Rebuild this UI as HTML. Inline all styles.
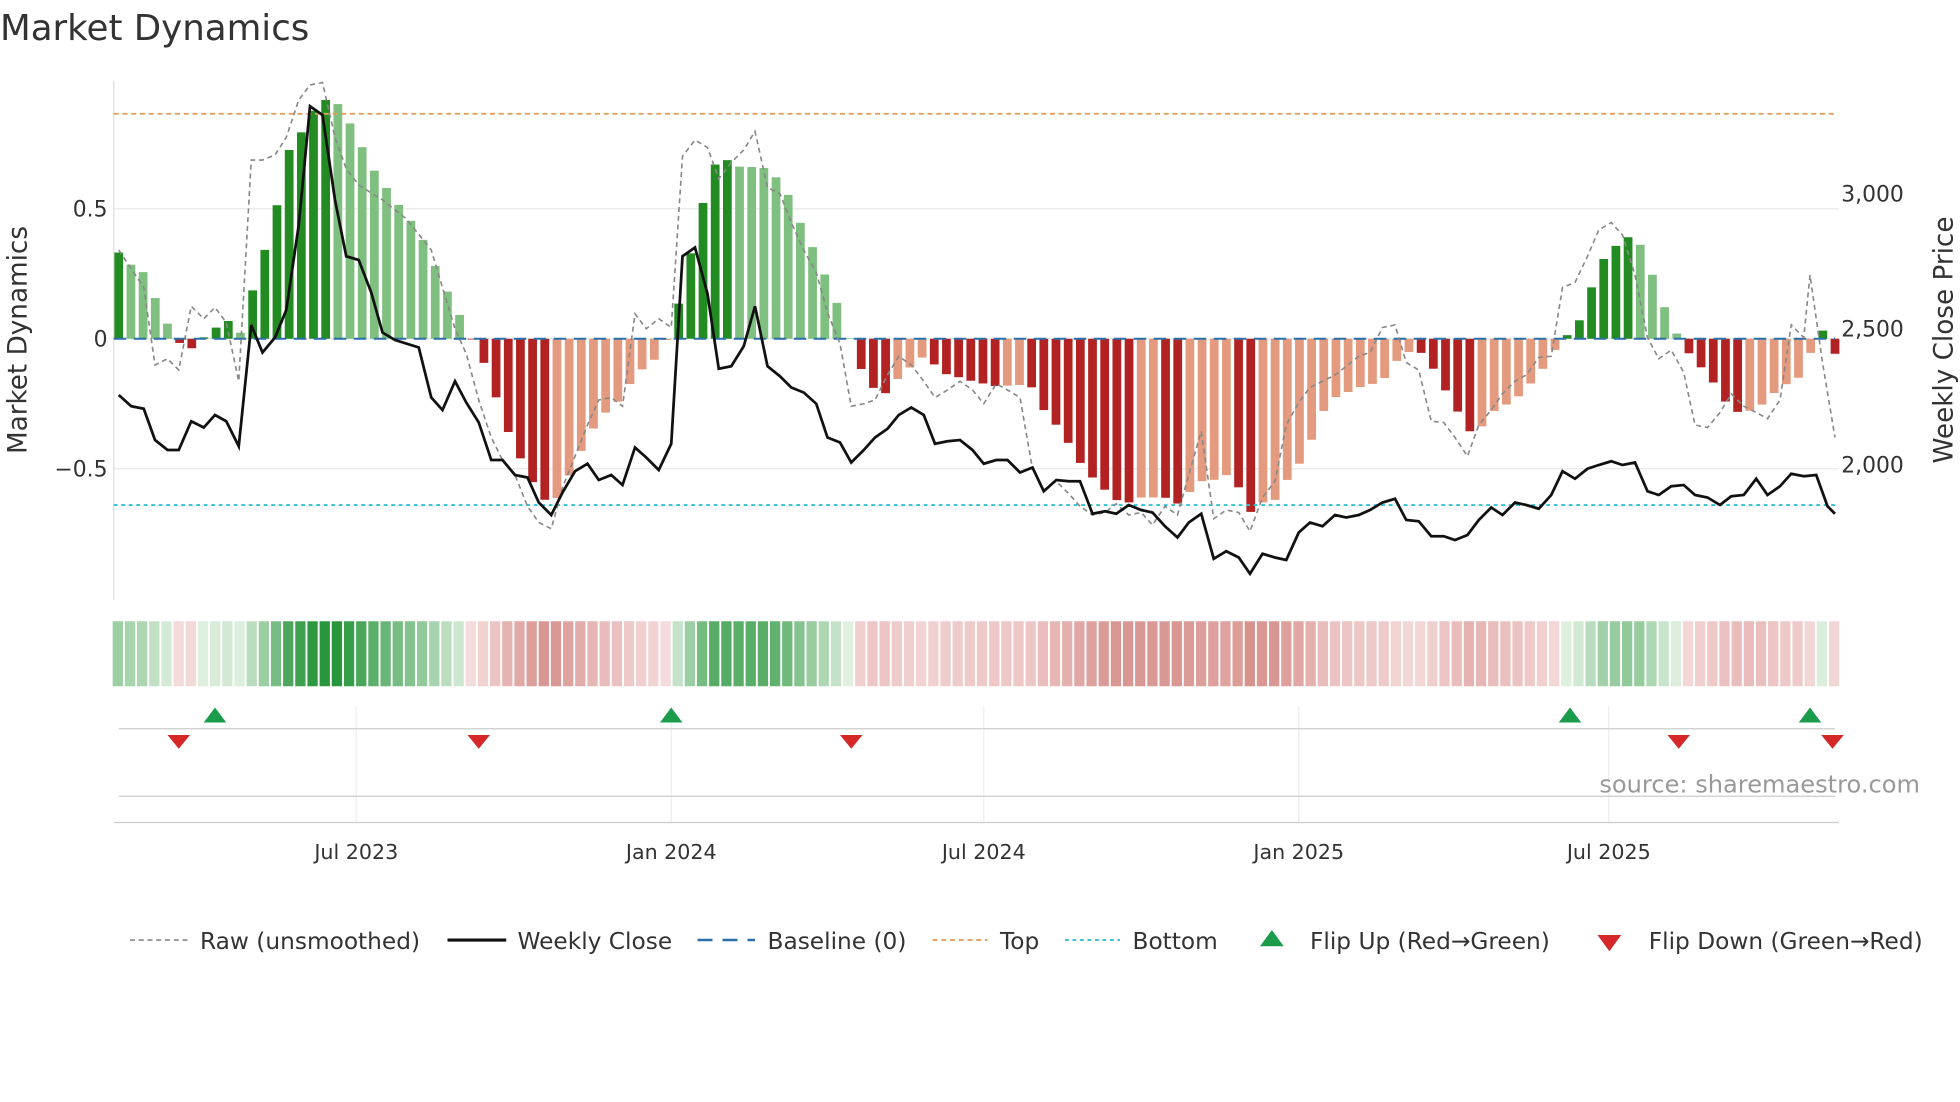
<!DOCTYPE html>
<html><head><meta charset="utf-8"><style>
html,body{margin:0;padding:0;background:#fff;width:1960px;height:1102px;overflow:hidden}
svg{display:block;font-family:"DejaVu Sans","Liberation Sans",sans-serif}
</style></head><body>
<svg id="s" width="1960" height="1102" viewBox="0 0 1568 881.6" xmlns="http://www.w3.org/2000/svg">
<text x="0" y="32" font-size="28.5" fill="#333">Market Dynamics</text>
<g id="grid" stroke="#e8e8e8" stroke-width="1">
<line x1="91" y1="167" x2="1471" y2="167"/><line x1="91" y1="271" x2="1471" y2="271"/><line x1="91" y1="375" x2="1471" y2="375"/>
</g>
<line x1="91" y1="65" x2="91" y2="480" stroke="#ddd"/>
<g font-size="17.5" fill="#333">
<text x="86" y="173" text-anchor="end">0.5</text>
<text x="86" y="277" text-anchor="end">0</text>
<text x="86" y="381" text-anchor="end">−0.5</text>
<text x="1473" y="161">3,000</text>
<text x="1473" y="269">2,500</text>
<text x="1473" y="378">2,000</text>
<text transform="translate(21,272) rotate(-90)" text-anchor="middle" font-size="21">Market Dynamics</text>
<text transform="translate(1562,272) rotate(-90)" text-anchor="middle" font-size="21">Weekly Close Price</text>
</g>
<g id="bars"></g>
<line x1="91" y1="91" x2="1468" y2="91" stroke="#e0a060" stroke-width="1.5" stroke-dasharray="4,3"/>
<line x1="91" y1="404" x2="1468" y2="404" stroke="#30c0d0" stroke-width="1.5" stroke-dasharray="3,3"/>
<line x1="91" y1="271" x2="1468" y2="271" stroke="#2a6fa8" stroke-width="1.6" stroke-dasharray="10,6"/>
<polyline id="raw" fill="none" stroke="#888" stroke-width="1.3" stroke-dasharray="4,3"/>
<polyline id="close" fill="none" stroke="#111" stroke-width="2.2"/>
<g id="heat"></g>
<g stroke="#eee"><line x1="285" y1="565" x2="285" y2="658"/><line x1="537" y1="565" x2="537" y2="658"/><line x1="787" y1="565" x2="787" y2="658"/><line x1="1039" y1="565" x2="1039" y2="658"/><line x1="1287" y1="565" x2="1287" y2="658"/></g>
<line x1="95" y1="583" x2="1468" y2="583" stroke="#ccc"/>
<line x1="95" y1="637" x2="1468" y2="637" stroke="#ccc"/>
<line x1="91" y1="658" x2="1471" y2="658" stroke="#ccc"/>
<g id="flips"></g>
<text x="1536" y="634" font-size="19.3" fill="#999" text-anchor="end">source: sharemaestro.com</text>
<g font-size="16.5" fill="#333" text-anchor="middle">
<text x="285" y="687">Jul 2023</text><text x="537" y="687">Jan 2024</text><text x="787" y="687">Jul 2024</text><text x="1039" y="687">Jan 2025</text><text x="1287" y="687">Jul 2025</text>
</g>
<g font-size="18.6" fill="#333">
<line x1="104" y1="752" x2="150" y2="752" stroke="#888" stroke-width="1.3" stroke-dasharray="4,3"/><text x="160" y="759">Raw (unsmoothed)</text>
<line x1="358" y1="752" x2="405" y2="752" stroke="#111" stroke-width="2.5"/><text x="414" y="759">Weekly Close</text>
<line x1="558" y1="752" x2="604" y2="752" stroke="#2a6fa8" stroke-width="2" stroke-dasharray="12,8"/><text x="614" y="759">Baseline (0)</text>
<line x1="746" y1="752" x2="790" y2="752" stroke="#e0a060" stroke-width="1.5" stroke-dasharray="4,3"/><text x="800" y="759">Top</text>
<line x1="852" y1="752" x2="896" y2="752" stroke="#30c0d0" stroke-width="1.5" stroke-dasharray="3,3"/><text x="906" y="759">Bottom</text>
<polygon points="1008,757 1027,757 1017.5,744" fill="#1a9c4a"/><text x="1048" y="759">Flip Up (Red→Green)</text>
<polygon points="1278,748 1297,748 1287.5,761" fill="#d62728"/><text x="1319" y="759">Flip Down (Green→Red)</text>
</g>
</svg>
<script>
function P(s){return s.trim().split(/[\s,]+/).map(function(t){var a=t.split(':');return[+a[0],+a[1]];});}
function interp(k,x){if(x<=k[0][0])return k[0][1];for(var i=1;i<k.length;i++){if(x<=k[i][0]){var a=k[i-1],b=k[i];return a[1]+(b[1]-a[1])*(x-a[0])/(b[0]-a[0]);}}return k[k.length-1][1];}
var bk=P("95:202 105:212 115:218 124:238 134:259 143:274 153:279 163:270 172:263 181:254 191:271 201:236 210:206 220:173 229:123 239:110 248:92 258:80 268:80 277:93 287:112 297:133 316:160 335:185 345:205 354:227 364:243 373:265 383:280 393:305 402:335 412:358 422:378 431:395 441:405 450:392 460:370 479:335 498:318 508:300 527:285 537:264 546:232 556:188 566:148 575:124 585:130 595:135 604:133 614:135 624:145 633:160 643:185 653:203 662:225 672:248 681:276 691:300 700:312 710:315 719:302 729:293 739:285 748:292 758:300 768:302 778:305 797:309 816:308 826:310 835:328 845:340 855:355 864:370 874:382 884:392 893:400 903:402 913:398 932:398 942:403 961:385 971:384 981:380 991:390 1000:410 1010:402 1020:400 1029:385 1039:372 1048:355 1058:330 1068:318 1087:310 1106:305 1116:290 1125:282 1135:280 1145:292 1155:310 1164:325 1174:345 1183:345 1193:330 1212:320 1231:300 1241:285 1250:270 1260:265 1270:240 1279:212 1289:200 1298:192 1308:187 1318:208 1327:235 1337:258 1347:278 1356:288 1366:300 1376:313 1385:330 1405:328 1424:310 1443:300 1453:268 1462:262 1468:283");
var ck=P("95:316 105:325 115:327 124:352 134:360 143:360 153:337 163:342 172:332 181:337 191:357 201:260 210:282 220:270 229:248 239:180 248:85 258:92 268:160 277:205 287:208 297:234 306:266 316:272 335:278 345:318 354:328 364:305 373:322 383:338 393:368 402:368 412:380 422:382 431:402 441:412 450:394 460:377 470:371 479:384 489:380 498:388 508:358 517:366 527:376 537:355 546:205 556:198 566:235 575:295 585:293 595:277 604:245 614:293 624:301 633:310 643:314 653:323 662:350 672:354 681:370 691:360 700:350 710:343 719:332 729:326 739:332 748:355 758:353 768:352 778:360 787:371 797:368 806:368 816:378 826:374 835:393 845:384 855:385 864:385 874:411 884:409 893:411 903:404 913:408 922:410 932:421 942:430 951:418 961:411 971:447 981:441 991:446 1000:459 1010:443 1020:446 1029:448 1039:426 1048:418 1058:421 1068:412 1077:414 1087:412 1096:408 1106:402 1116:399 1125:416 1135:417 1145:429 1155:429 1164:432 1174:428 1183:416 1193:406 1202:412 1212:402 1221:404 1231:407 1241:396 1250:377 1260:383 1270:375 1279:372 1289:369 1298:372 1308:370 1318:393 1327:396 1337:389 1347:388 1356:396 1366:398 1376:404 1385:397 1395:396 1405:383 1414:396 1424:389 1433:379 1443:381 1453:380 1462:405 1468:411");
var rk="95:200 105:215 115:230 124:292 134:287 143:296 153:245 163:255 172:246 181:258 191:305 201:128 210:128 220:124 229:110 239:80 248:68 258:66 268:110 277:135 287:148 306:160 325:175 345:200 354:230 364:263 373:283 383:320 393:350 402:368 412:380 422:405 431:418 441:423 450:390 460:365 470:340 479:320 489:318 498:325 508:251 517:263 527:255 537:262 546:125 556:112 566:118 575:143 585:130 595:120 604:105 614:150 624:155 633:178 643:200 653:218 662:250 672:275 681:325 691:323 700:320 710:300 719:285 729:292 739:305 748:318 758:312 768:305 778:312 787:323 797:307 806:312 816:318 826:375 835:392 845:385 855:395 864:405 874:412 884:410 893:403 903:412 913:410 922:420 932:405 942:412 951:380 961:345 971:415 981:408 991:410 1000:425 1010:398 1020:385 1029:340 1039:322 1048:310 1058:305 1068:300 1077:293 1087:285 1096:282 1106:262 1116:260 1125:290 1135:296 1145:337 1155:338 1164:350 1174:365 1183:340 1193:328 1202:315 1212:305 1221:300 1231:286 1241:285 1250:230 1260:226 1270:205 1279:184 1289:178 1298:188 1308:220 1318:270 1327:287 1337:280 1347:298 1356:340 1366:342 1376:330 1385:315 1395:325 1405:330 1414:335 1424:320 1433:260 1443:270 1448:220 1458:290 1468:350";
document.getElementById('raw').setAttribute('points',rk.replace(/:/g,','));
document.getElementById('close').setAttribute('points',ck.map(function(p){return p.join(',')}).join(' '));
var ns='http://www.w3.org/2000/svg',bars=document.getElementById('bars'),heat=document.getElementById('heat');
function R(g,x,y,w,h,f){var r=document.createElementNS(ns,'rect');r.setAttribute('x',x);r.setAttribute('y',y);r.setAttribute('width',w);r.setAttribute('height',h);r.setAttribute('fill',f);g.appendChild(r);}
var N=142,step=(1468-95)/(N-1),prev=271;
function mix(a,b,t){return 'rgb('+[0,1,2].map(function(i){return Math.round(a[i]+(b[i]-a[i])*t)}).join(',')+')';}
for(var i=0;i<N;i++){var x=95+i*step,y=interp(bk,x),v=(271-y)/208,c;
 if(v>=0){c=(y<=prev)?'#228b22':'#7fbf7f';R(bars,x-3.5,y,7,271-y,c);}
 else{c=(y>=prev)?'#b22222':'#e49a7e';R(bars,x-3.5,271,7,y-271,c);}
 var t=Math.min(1,Math.abs(v)/0.9);
 var hc=v>=0?mix([225,240,225],[40,150,60],t):mix([245,220,220],[205,120,115],t);
 R(heat,x-step/2,497,step-1.5,52,hc);prev=y;}
var fl=document.getElementById('flips');
[172,537,1256,1448].forEach(function(x){var p=document.createElementNS(ns,'polygon');p.setAttribute('points',(x-9)+',578 '+(x+9)+',578 '+x+',566');p.setAttribute('fill','#1a9c4a');fl.appendChild(p);});
[143,383,681,1343,1466].forEach(function(x){var p=document.createElementNS(ns,'polygon');p.setAttribute('points',(x-9)+',588 '+(x+9)+',588 '+x+',599');p.setAttribute('fill','#d62728');fl.appendChild(p);});
</script>
</body></html>
